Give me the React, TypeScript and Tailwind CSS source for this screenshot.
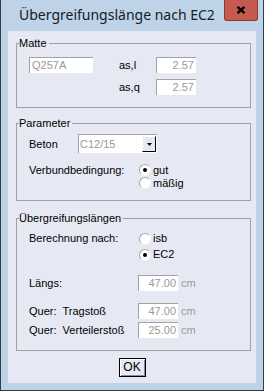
import type { ReactNode } from "react";

function Field({ value, width, right = true }: { value: string; width: string; right?: boolean }) {
  return (
    <div
      className={`${width} h-[16px] shrink-0 bg-white border-t border-l border-[#a3a3a3] flex items-center text-[#9a9a9a] leading-[13px] ${
        right ? "justify-end pr-[2px]" : "pl-[2px]"
      }`}
    >
      {value}
    </div>
  );
}

function Radio({ checked, label }: { checked?: boolean; label: string }) {
  return (
    <div className="flex items-center gap-[2px]">
      <div className="w-[12px] h-[12px] rounded-full border border-t-[#a8a8a8] border-l-[#a8a8a8] border-r-[#f4f4f4] border-b-[#f4f4f4] bg-white flex items-center justify-center">
        {checked ? <div className="w-[4px] h-[4px] rounded-full bg-black" /> : null}
      </div>
      <span>{label}</span>
    </div>
  );
}

function Group({ title, className, children }: { title: string; className: string; children: ReactNode }) {
  return (
    <fieldset className={`w-[235px] border border-[#a0a0a0] ${className}`}>
      <legend className="ml-[2px] pr-[2px] leading-[13px]">{title}</legend>
      {children}
    </fieldset>
  );
}

export default function App() {
  return (
    <div className="w-[264px] h-[391px] bg-[#bed3e7] border-x border-b border-[#373d46] flex flex-col font-['Liberation_Sans',Arial,sans-serif] text-[11px] text-black">
      <div className="h-[31px] flex items-start shrink-0">
        <div className="pl-[18px] pt-[5px] text-[14px] leading-[20px] text-[#141c26] font-['Noto_Sans',sans-serif]">
          Übergreifungslänge nach EC2
        </div>
        <div className="ml-auto mr-[5px] w-[34px] h-[21px] bg-[#c75a50] border-x border-b border-[#8e3b35] rounded-b-[3px] flex items-center justify-center">
          <svg width="10" height="8" viewBox="0 0 10 8">
            <path d="M1.5 0.8 L8.5 7.2 M8.5 0.8 L1.5 7.2" stroke="#000" strokeWidth="2.4" />
          </svg>
        </div>
      </div>

      <div className="mx-[7px] h-[352px] bg-[#e6e9f4] flex flex-col pl-[8px]">
        <Group title="Matte" className="mt-[6px] pb-[12px]">
          <div className="mt-[7px] pl-[12px] flex items-center h-[16px]">
            <Field value="Q257A" width="w-[64px]" right={false} />
            <span className="ml-[26px] w-[37px]">as,l</span>
            <Field value="2.57" width="w-[40px]" />
          </div>
          <div className="mt-[6px] pl-[102px] flex items-center h-[16px]">
            <span className="w-[37px]">as,q</span>
            <Field value="2.57" width="w-[40px]" />
          </div>
        </Group>

        <Group title="Parameter" className="mt-[9px] pb-[11px]">
          <div className="mt-[4px] pl-[12px] flex items-center h-[19px]">
            <span className="w-[49px] pt-[2px]">Beton</span>
            <div className="w-[79px] h-[19px] bg-white border-t border-l border-[#a3a3a3] flex items-center">
              <span className="flex-1 pl-[1px] text-[#9a9a9a]">C12/15</span>
              <div className="w-[14px] h-[16px] mr-[1px] bg-[#e6e9f4] border-t border-l border-t-white border-l-white border-r border-b border-r-black border-b-black flex items-center justify-center">
                <svg width="5" height="3" viewBox="0 0 5 3">
                  <path d="M0 0 H5 L2.5 3 Z" fill="#000" />
                </svg>
              </div>
            </div>
          </div>
          <div className="mt-[11px] pl-[12px] flex h-[12px] leading-[12px]">
            <span className="w-[110px]">Verbundbedingung:</span>
            <Radio checked label="gut" />
          </div>
          <div className="mt-[1px] pl-[122px] flex h-[12px] leading-[12px]">
            <Radio label="mäßig" />
          </div>
        </Group>

        <Group title="Übergreifungslängen" className="mt-[11px] pb-[12px]">
          <div className="mt-[7px] pl-[12px] flex items-center h-[13px]">
            <span className="w-[110px]">Berechnung nach:</span>
            <Radio label="isb" />
          </div>
          <div className="mt-[3px] pl-[122px] flex items-center h-[13px]">
            <Radio checked label="EC2" />
          </div>
          <div className="mt-[14px] pl-[12px] flex items-center h-[16px]">
            <span className="w-[109px]">Längs:</span>
            <Field value="47.00" width="w-[40px]" />
            <span className="ml-[3px] text-[#9a9a9a]">cm</span>
          </div>
          <div className="mt-[12px] pl-[12px] flex items-center h-[16px]">
            <span className="w-[109px] whitespace-pre">Quer:  Tragstoß</span>
            <Field value="47.00" width="w-[40px]" />
            <span className="ml-[3px] text-[#9a9a9a]">cm</span>
          </div>
          <div className="mt-[3px] pl-[12px] flex items-center h-[16px]">
            <span className="w-[109px] whitespace-pre">Quer:  Verteilerstoß</span>
            <Field value="25.00" width="w-[40px]" />
            <span className="ml-[3px] text-[#9a9a9a]">cm</span>
          </div>
        </Group>

        <div className="mt-[7px] flex justify-center pr-[5px]">
          <button
            type="button"
            className="ml-[-3px] w-[27px] h-[19px] border border-black bg-[#e6e9f4] shadow-[inset_1px_1px_0_#fff,inset_-1px_-1px_0_#8c8c8c] text-[12px] leading-[15px] text-black"
          >
            OK
          </button>
        </div>
      </div>
    </div>
  );
}
